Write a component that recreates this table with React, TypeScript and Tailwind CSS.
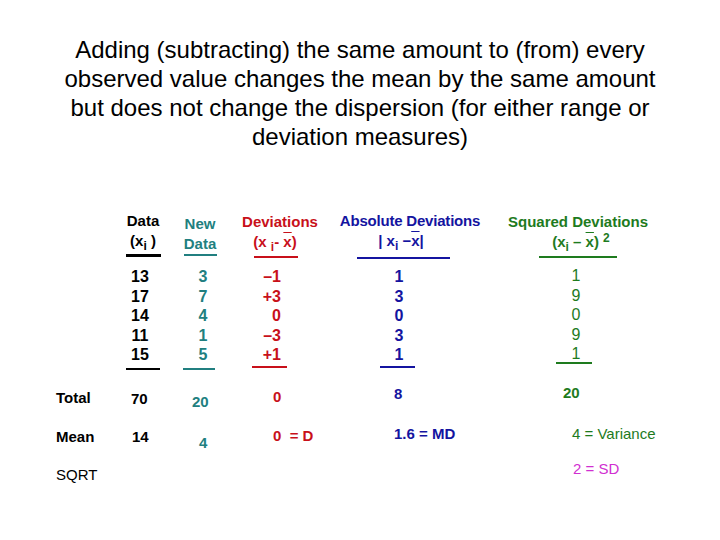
import React from "react";

const Sub = ({ children }: { children: React.ReactNode }) => (
  <span className="text-[12px] leading-none align-[-4px]">{children}</span>
);
const XBar = () => <span className="overline">x</span>;

const Values = ({ items, className }: { items: string[]; className: string }) => (
  <div className={className}>
    {items.map((v, i) => (
      <div key={i}>{v}</div>
    ))}
  </div>
);

export default function App() {
  const data = ["13", "17", "14", "11", "15"];
  const nd = ["3", "7", "4", "1", "5"];
  const dev = ["\u20131", "+3", "0", "\u20133", "+1"];
  const abs = ["1", "3", "0", "3", "1"];
  const sq = ["1", "9", "0", "9", "1"];
  return (
    <div className="w-[720px] h-[540px] bg-white overflow-hidden font-['Liberation_Sans',Arial,sans-serif] text-black">
      <div className="pt-[35px] text-center text-[24px] leading-[29px]">
        <div>Adding (subtracting) the same amount to (from) every</div>
        <div>observed value changes the mean by the same amount</div>
        <div>but does not change the dispersion (for either range or</div>
        <div>deviation measures)</div>
      </div>

      {/* Columns */}
      <div className="mt-[60px] h-[174px] pl-[113px] flex items-start">
        {/* Data */}
        <div className="w-[57px] shrink-0 text-black">
          <div className="w-[60px] text-center text-[15px] leading-[20px] font-bold">Data</div>
          <div className="w-[60px] text-center text-[15px] leading-[20px] font-bold">(x<Sub>i</Sub> )</div>
          <div className="mt-[2px] ml-[13px] h-[3px] w-[35px] bg-black" />
          <Values items={data} className="mt-[10px] w-[54px] text-center text-[16px] leading-[19.5px] font-bold" />
          <div className="mt-[3px] ml-[13px] h-[2px] w-[34px] bg-black" />
        </div>

        {/* New Data */}
        <div className="mt-[3px] w-[70px] shrink-0 text-[#217f80]">
          <div className="w-[60px] text-center text-[15px] leading-[20px] font-bold">New</div>
          <div className="w-[60px] text-center text-[15px] leading-[20px] font-bold">Data</div>
          <div className="ml-[14px] h-[2px] w-[33px] bg-[#217f80]" />
          <Values items={nd} className="mt-[11px] w-[66px] text-center text-[16px] leading-[19.5px] font-bold" />
          <div className="mt-[3px] ml-[13px] h-[2px] w-[32px] bg-[#217f80]" />
        </div>

        {/* Deviations */}
        <div className="mt-[1px] w-[90px] shrink-0 text-[#c8101a]">
          <div className="w-[80px] text-center text-[15px] leading-[20px] font-bold">Deviations</div>
          <div className="w-[70px] text-center text-[15px] leading-[20px] font-bold">
            (x <Sub>i</Sub>- <XBar />)
          </div>
          <div className="mt-[3px] ml-[14px] h-[2px] w-[44px] bg-[#c8101a]" />
          <Values items={dev} className="mt-[9px] w-[41px] text-right text-[16px] leading-[19.5px] font-bold" />
          <div className="mt-[1px] ml-[12px] h-[2px] w-[35px] bg-[#c8101a]" />
        </div>

        {/* Absolute Deviations */}
        <div className="w-[168px] shrink-0 text-[#1414a0]">
          <div className="w-[160px] text-center text-[15px] leading-[20px] font-bold tracking-[-0.2px]">Absolute Deviations</div>
          <div className="w-[142px] text-center text-[15px] leading-[20px] font-bold">
            | x<Sub>i</Sub> &minus;<XBar />|
          </div>
          <div className="mt-[5px] ml-[27px] h-[2px] w-[93px] bg-[#1414a0]" />
          <Values items={abs} className="mt-[8px] w-[138px] text-center text-[16px] leading-[19.5px] font-bold" />
          <div className="mt-[1px] ml-[50px] h-[2px] w-[35px] bg-[#1414a0]" />
        </div>

        {/* Squared Deviations */}
        <div className="mt-[1px] w-[160px] shrink-0 text-[#1e7b1e]">
          <div className="text-center text-[15px] leading-[20px] font-bold">Squared Deviations</div>
          <div className="pl-[6px] text-center text-[15px] leading-[20px] font-bold">
            (x<Sub>i</Sub> &ndash; <XBar />) <span className="text-[12px] leading-none align-[5px]">2</span>
          </div>
          <div className="mt-[3px] ml-[41px] h-[2px] w-[78px] bg-[#1e7b1e]" />
          <Values items={sq} className="mt-[8px] pr-[4px] text-center text-[16px] leading-[19.5px]" />
          <div className="mt-[-2px] ml-[58px] h-[2px] w-[36px] bg-[#1e7b1e]" />
        </div>
      </div>

      {/* Summary rows */}
      <div className="pl-[56px] text-[15px] leading-none">
        <div className="h-[41px] flex items-start">
          <div className="mt-[5px] w-[75px] shrink-0 font-bold">Total</div>
          <div className="mt-[6px] w-[61px] shrink-0 font-bold">70</div>
          <div className="mt-[9px] w-[81px] shrink-0 font-bold text-[#217f80]">20</div>
          <div className="mt-[4px] w-[121px] shrink-0 font-bold text-[#c8101a]">0</div>
          <div className="mt-[1px] w-[169px] shrink-0 font-bold text-[#1414a0]">8</div>
          <div className="font-bold text-[#1e7b1e]">20</div>
        </div>
        <div className="h-[35px] flex items-start">
          <div className="mt-[3px] w-[76px] shrink-0 font-bold">Mean</div>
          <div className="mt-[3px] w-[67px] shrink-0 font-bold">14</div>
          <div className="mt-[9px] w-[74px] shrink-0 font-bold text-[#217f80]">4</div>
          <div className="mt-[2px] w-[121px] shrink-0 whitespace-pre font-bold text-[#c8101a]">0  = D</div>
          <div className="w-[178px] shrink-0 font-bold text-[#1414a0]">1.6 = MD</div>
          <div className="text-[#1e7b1e]">4 = Variance</div>
        </div>
        <div className="flex items-start">
          <div className="mt-[6px] w-[517px] shrink-0">SQRT</div>
          <div className="text-[#d12fd1]">2 = SD</div>
        </div>
      </div>
    </div>
  );
}
